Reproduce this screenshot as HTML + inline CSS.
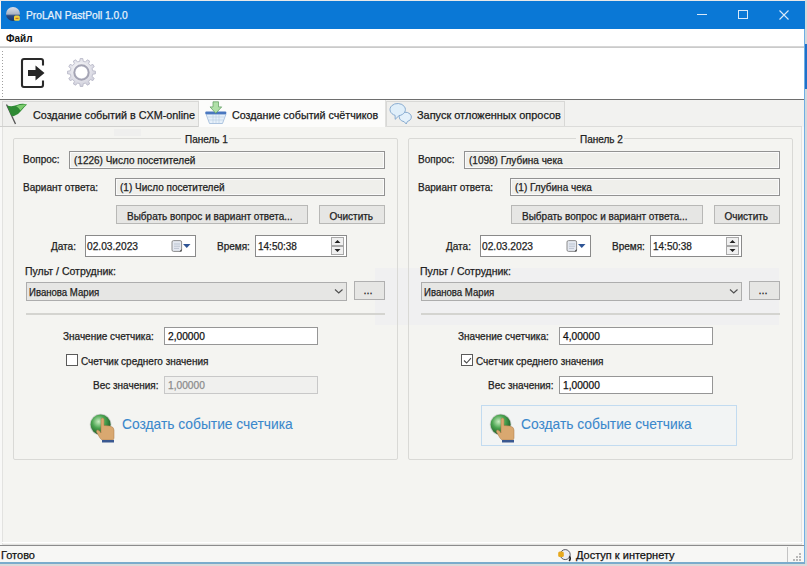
<!DOCTYPE html>
<html><head><meta charset="utf-8">
<style>
*{box-sizing:border-box}
html,body{margin:0;padding:0}
body{width:807px;height:566px;overflow:hidden;position:relative;background:#f4f4f1;font-family:"Liberation Sans",sans-serif}
.a{position:absolute}
.t{position:absolute;white-space:nowrap;font-size:10px;line-height:12px;color:#222;-webkit-text-stroke:0.25px currentColor}
</style></head><body>
<div class="a" style="left:0px;top:0px;width:807px;height:1px;background:#e8e8e8"></div>
<div class="a" style="left:1px;top:1px;width:804px;height:28px;background:#0a78d6"></div>
<svg class="a" style="left:5px;top:6px" width="16" height="16" viewBox="0 0 16 16"><defs><linearGradient id="ai" x1="0" y1="0" x2="0" y2="1"><stop offset="0" stop-color="#d8dee8"/><stop offset="0.5" stop-color="#aab4c4"/><stop offset="0.62" stop-color="#2a4a80"/><stop offset="1" stop-color="#1a3868"/></linearGradient></defs><circle cx="8" cy="8" r="7" fill="url(#ai)"/><rect x="9" y="9.6" width="5.8" height="5.2" rx="1.5" fill="#f2d23a"/><rect x="10.5" y="11.8" width="3" height="1" fill="#c05a20"/></svg>
<div class="t" style="left:25.5px;top:9px;font-size:11px;color:#e8f2fb;transform:scaleX(0.93);transform-origin:0 0;">ProLAN PastPoll 1.0.0</div>
<div class="a" style="left:697px;top:14px;width:10px;height:1px;background:#d8e8f8"></div>
<div class="a" style="left:738px;top:10px;width:10px;height:9px;border:1px solid #d8e8f8"></div>
<svg class="a" style="left:778px;top:9px" width="12" height="12" viewBox="0 0 12 12"><path d="M1.5 1.5L10.5 10.5M10.5 1.5L1.5 10.5" stroke="#d8e8f8" stroke-width="1.1"/></svg>
<div class="a" style="left:0px;top:29px;width:804px;height:18px;background:#fff"></div>
<div class="t" style="left:5.5px;top:31.5px;font-size:10.5px;color:#111;transform:scaleX(0.95);transform-origin:0 0;font-weight:bold;-webkit-text-stroke:0">Файл</div>
<div class="a" style="left:0px;top:46px;width:804px;height:2px;background:linear-gradient(#dcdcdc,#c4c4c4)"></div>
<div class="a" style="left:0px;top:48px;width:804px;height:51px;background:#fff"></div>
<div class="a" style="left:2px;top:51px;width:1px;height:1px;background:#a0a0a0"></div>
<div class="a" style="left:2px;top:54px;width:1px;height:1px;background:#a0a0a0"></div>
<div class="a" style="left:2px;top:57px;width:1px;height:1px;background:#a0a0a0"></div>
<div class="a" style="left:2px;top:60px;width:1px;height:1px;background:#a0a0a0"></div>
<div class="a" style="left:2px;top:63px;width:1px;height:1px;background:#a0a0a0"></div>
<div class="a" style="left:2px;top:66px;width:1px;height:1px;background:#a0a0a0"></div>
<div class="a" style="left:2px;top:69px;width:1px;height:1px;background:#a0a0a0"></div>
<div class="a" style="left:2px;top:72px;width:1px;height:1px;background:#a0a0a0"></div>
<div class="a" style="left:2px;top:75px;width:1px;height:1px;background:#a0a0a0"></div>
<div class="a" style="left:2px;top:78px;width:1px;height:1px;background:#a0a0a0"></div>
<div class="a" style="left:2px;top:81px;width:1px;height:1px;background:#a0a0a0"></div>
<div class="a" style="left:2px;top:84px;width:1px;height:1px;background:#a0a0a0"></div>
<div class="a" style="left:2px;top:87px;width:1px;height:1px;background:#a0a0a0"></div>
<div class="a" style="left:2px;top:90px;width:1px;height:1px;background:#a0a0a0"></div>
<div class="a" style="left:2px;top:93px;width:1px;height:1px;background:#a0a0a0"></div>
<div class="a" style="left:2px;top:96px;width:1px;height:1px;background:#a0a0a0"></div>
<svg class="a" style="left:20px;top:57px" width="26" height="32" viewBox="0 0 26 32"><path d="M23 8.5V4Q23 2 21 2H4Q2 2 2 4V28Q2 30 4 30H21Q23 30 23 28V23.5" stroke="#2a2a2a" stroke-width="2.1" fill="none"/><path d="M8 13H15.5V8.5L24.5 16L15.5 23.5V19H8Z" fill="#262626"/></svg>
<svg class="a" style="left:67px;top:58px" width="29" height="29" viewBox="0 0 29 29"><defs><radialGradient id="gg" cx="45%" cy="40%" r="60%"><stop offset="0" stop-color="#ffffff"/><stop offset="1" stop-color="#d0d0dc"/></radialGradient></defs><path d="M25.66 12.73 L28.44 13.18 L28.44 15.82 L25.66 16.27 L25.05 18.55 L27.23 20.33 L25.91 22.61 L23.28 21.61 L21.61 23.28 L22.61 25.91 L20.33 27.23 L18.55 25.05 L16.27 25.66 L15.82 28.44 L13.18 28.44 L12.73 25.66 L10.45 25.05 L8.67 27.23 L6.39 25.91 L7.39 23.28 L5.72 21.61 L3.09 22.61 L1.77 20.33 L3.95 18.55 L3.34 16.27 L0.56 15.82 L0.56 13.18 L3.34 12.73 L3.95 10.45 L1.77 8.67 L3.09 6.39 L5.72 7.39 L7.39 5.72 L6.39 3.09 L8.67 1.77 L10.45 3.95 L12.73 3.34 L13.18 0.56 L15.82 0.56 L16.27 3.34 L18.55 3.95 L20.33 1.77 L22.61 3.09 L21.61 5.72 L23.28 7.39 L25.91 6.39 L27.23 8.67 L25.05 10.45Z" fill="url(#gg)" stroke="#b4b4c4" stroke-width="0.8"/><circle cx="14.5" cy="14.5" r="7.2" fill="none" stroke="#a4a4b4" stroke-width="2"/><circle cx="14.5" cy="14.5" r="5.8" fill="#fff"/></svg>
<div class="a" style="left:0px;top:99px;width:804px;height:1px;background:#6e6e6e"></div>
<div class="a" style="left:0px;top:100px;width:804px;height:27px;background:#f2f2f0"></div>
<div class="a" style="left:2px;top:101px;width:197px;height:26px;border:1px solid #d8d8d6;border-bottom:none;background:#efefed"></div>
<svg class="a" style="left:4px;top:102px" width="26" height="24" viewBox="0 0 26 24"><path d="M2.5 2.5L11.5 22" stroke="#555" stroke-width="1.3"/><path d="M3 3.5Q8 5 13 3Q18 1 23 2.5Q20 5 17 9Q14 13 10 14Q8 14.5 7 13Z" fill="#2f8a34"/><path d="M12 4Q17 2 22.5 2.6Q19 5 16.5 8.5Q15 6 12 4Z" fill="#7ccc6e"/></svg>
<div class="t" style="left:33px;top:109px;font-size:11px;color:#1a1a1a;transform:scaleX(0.98);transform-origin:0 0;">Создание событий в CXM-online</div>
<div class="a" style="left:199px;top:100px;width:187px;height:28px;background:#fcfcfb;border-right:1px solid #e0e0de"></div>
<svg class="a" style="left:202px;top:100px" width="28" height="26" viewBox="0 0 28 26"><path d="M4 14H24L20.5 23.5H7.5Z" fill="#e6f0fa" stroke="#9cb8d8" stroke-width="0.8"/><path d="M6 17H22M6.8 20H21.2M11 14.5V23M14 14.5V23M17 14.5V23" stroke="#b8cce0" stroke-width="0.6"/><rect x="3.2" y="11.5" width="21.2" height="2.8" rx="1.2" fill="#4a78c0"/><path d="M11 1.8H16.5V6.9H19.7L13.8 13.3L8 6.9H11Z" fill="#b0e0a8" stroke="#5a9a5a" stroke-width="0.7"/></svg>
<div class="t" style="left:232px;top:108.8px;font-size:11px;color:#1a1a1a;transform:scaleX(0.975);transform-origin:0 0;">Создание событий счётчиков</div>
<div class="a" style="left:386px;top:101px;width:179px;height:26px;border:1px solid #d8d8d6;border-bottom:none;background:#efefed"></div>
<svg class="a" style="left:386px;top:100px" width="28" height="26" viewBox="0 0 28 26"><path d="M18.24 21.73A6.1 4.8 0 1 1 21.39 21.51L20.2 24Z" fill="#e4f1fb" stroke="#7ea4cc" stroke-width="0.9" stroke-linejoin="round"/><path d="M9.07 15.33A7.7 6.1 0 1 1 13.04 15.6L9.2 19.3Z" fill="#e0effa" stroke="#7ea4cc" stroke-width="0.9" stroke-linejoin="round"/></svg>
<div class="t" style="left:417px;top:109px;font-size:11px;color:#1a1a1a;transform:scaleX(0.995);transform-origin:0 0;">Запуск отложенных опросов</div>
<div class="a" style="left:0px;top:127px;width:804px;height:418px;background:#f8f8f7"></div>
<div class="a" style="left:2px;top:127px;width:800px;height:418px;border:1px solid #e2e2e0;border-top:none;background:#f4f4f1"></div>
<div class="a" style="left:2px;top:542px;width:800px;height:1px;background:#fff"></div>
<div class="a" style="left:386px;top:126px;width:416px;height:1px;background:#dcdcda"></div>
<div class="a" style="left:0px;top:126px;width:198px;height:1px;background:#cfcfcd"></div>
<div class="a" style="left:375px;top:268px;width:404px;height:57px;background:#f0f0f1"></div>
<div class="a" style="left:114px;top:129px;width:27px;height:7px;background:#efefee"></div>
<div class="a" style="left:13px;top:138px;width:385px;height:322px;border:1px solid #d9d9d6;border-radius:2px"></div>
<div class="a" style="left:181px;top:132px;width:48px;height:10px;background:#f4f4f1"></div>
<div class="t" style="left:185px;top:133.5px;font-size:10px;color:#222;">Панель 1</div>
<div class="t" style="left:23px;top:154px;font-size:10px;color:#222;">Вопрос:</div>
<div class="a" style="left:69px;top:151px;width:316px;height:18px;border:1px solid #929292;box-shadow:inset 0 0 0 1px #fafafa;background:#efefeb"></div>
<div class="t" style="left:74px;top:155px;font-size:10px;color:#222;">(1226) Число посетителей</div>
<div class="t" style="left:23px;top:182px;font-size:10px;color:#222;">Вариант ответа:</div>
<div class="a" style="left:115px;top:177.5px;width:270px;height:18px;border:1px solid #929292;box-shadow:inset 0 0 0 1px #fafafa;background:#efefeb"></div>
<div class="t" style="left:120px;top:182px;font-size:10px;color:#222;">(1) Число посетителей</div>
<div class="a" style="left:116px;top:205px;width:192px;height:19px;border:1px solid #b8b8b6;background:#e6e6e4"></div>
<div class="t" style="left:127px;top:210.8px;font-size:10px;color:#222;">Выбрать вопрос и вариант ответа...</div>
<div class="a" style="left:319px;top:205px;width:66px;height:19px;border:1px solid #b8b8b6;background:#e6e6e4"></div>
<div class="t" style="left:329.5px;top:210.8px;font-size:10px;color:#222;">Очистить</div>
<div class="t" style="left:51px;top:241px;font-size:10px;color:#222;">Дата:</div>
<div class="a" style="left:85px;top:235px;width:111px;height:22px;border:1px solid #8a8a8a;background:#fff"></div>
<div class="t" style="left:87px;top:240.5px;font-size:10.2px;color:#222;">02.03.2023</div>
<svg class="a" style="left:171px;top:240px" width="12" height="12" viewBox="0 0 12 12"><rect x="1" y="0.6" width="9.6" height="10.8" rx="1.5" fill="#e4e8f0" stroke="#8c8c8c" stroke-width="1"/><path d="M3 4H9M3 6.2H9M3 8.4H8" stroke="#aab4c4" stroke-width="0.7"/><path d="M10.6 9L8.5 11.4H10.6Z" fill="#444"/></svg>
<svg class="a" style="left:183px;top:244px" width="8" height="5"><path d="M0 0H7.5L3.75 4Z" fill="#2f5596"/></svg>
<div class="t" style="left:217px;top:241px;font-size:10px;color:#222;">Время:</div>
<div class="a" style="left:255px;top:235px;width:92px;height:22px;border:1px solid #8a8a8a;background:#fff"></div>
<div class="t" style="left:258px;top:240.5px;font-size:10px;color:#222;">14:50:38</div>
<div class="a" style="left:331px;top:237px;width:13px;height:9px;border:1px solid #a8a8a8;background:#f0f0f0"></div>
<div class="a" style="left:331px;top:246px;width:13px;height:9px;border:1px solid #a8a8a8;background:#f0f0f0"></div>
<svg class="a" style="left:334px;top:239px" width="7" height="14"><path d="M0.5 4H6.5L3.5 1Z M0.5 10H6.5L3.5 13Z" fill="#222"/></svg>
<div class="t" style="left:25px;top:265px;font-size:10.5px;color:#222;">Пульт / Сотрудник:</div>
<div class="a" style="left:26px;top:282px;width:321px;height:19px;border:1px solid #adadad;background:#e6e6e4"></div>
<div class="t" style="left:29px;top:287px;font-size:10px;color:#222;transform:scaleX(0.96);transform-origin:0 0;">Иванова Мария</div>
<svg class="a" style="left:334px;top:288px" width="10" height="7"><path d="M1 1.5L4.75 5L8.5 1.5" stroke="#505050" stroke-width="1.15" fill="none"/></svg>
<div class="a" style="left:354px;top:281px;width:31px;height:19px;border:1px solid #b0b0b0;background:#e6e6e4"></div>
<div class="t" style="left:363.5px;top:284px;font-size:11px;color:#222;">...</div>
<div class="a" style="left:26px;top:313px;width:359px;height:2px;background:#d4d4d0"></div>
<div class="t" style="left:63px;top:331.3px;font-size:10px;color:#222;">Значение счетчика:</div>
<div class="a" style="left:164px;top:327px;width:154px;height:18px;border:1px solid #969696;background:#fff"></div>
<div class="t" style="left:168px;top:331.3px;font-size:10.2px;color:#111;">2,00000</div>
<div class="a" style="left:66px;top:354px;width:12px;height:12px;border:1.4px solid #5a5a5a;background:#fff"></div>
<div class="t" style="left:81px;top:355.8px;font-size:10px;color:#222;">Счетчик среднего значения</div>
<div class="t" style="left:93px;top:379.7px;font-size:10px;color:#222;">Вес значения:</div>
<div class="a" style="left:164px;top:376px;width:154px;height:18px;border:1px solid #c8c8c8;background:#f0f0ee"></div>
<div class="t" style="left:168px;top:379.7px;font-size:10.2px;color:#8c8c8c;">1,00000</div>
<svg class="a" style="left:84px;top:408px" width="34" height="36" viewBox="0 0 34 36"><defs><radialGradient id="gl0" cx="40%" cy="35%" r="65%"><stop offset="0" stop-color="#c8ecc0"/><stop offset="0.5" stop-color="#4aa450"/><stop offset="1" stop-color="#1f5e28"/></radialGradient></defs><circle cx="16.6" cy="16.6" r="10.8" fill="#c8ccc8"/><circle cx="16.6" cy="16.6" r="10" fill="url(#gl0)"/><path d="M17 19V11.5Q17 10 18.5 10Q20 10 20 11.5V17.5L26 18Q30 19 30 22V30Q30 32 28 32H19Q17 32 16 30L12.5 24Q12 22.5 13.5 22Q15 22 16 23.5L17 25Z" fill="#d9a870" stroke="#a87a48" stroke-width="0.5"/><rect x="18" y="32" width="12" height="2.5" fill="#3a5890"/></svg>
<div class="t" style="left:122px;top:418px;font-size:15px;color:#3a88cc;transform:scaleX(0.92);transform-origin:0 0;-webkit-text-stroke:0.1px currentColor">Создать событие счетчика</div>
<div class="a" style="left:408px;top:138px;width:385px;height:322px;border:1px solid #d9d9d6;border-radius:2px"></div>
<div class="a" style="left:576px;top:132px;width:48px;height:10px;background:#f4f4f1"></div>
<div class="t" style="left:580px;top:133.5px;font-size:10px;color:#222;">Панель 2</div>
<div class="t" style="left:418px;top:154px;font-size:10px;color:#222;">Вопрос:</div>
<div class="a" style="left:464px;top:151px;width:316px;height:18px;border:1px solid #929292;box-shadow:inset 0 0 0 1px #fafafa;background:#efefeb"></div>
<div class="t" style="left:469px;top:155px;font-size:10px;color:#222;">(1098) Глубина чека</div>
<div class="t" style="left:418px;top:182px;font-size:10px;color:#222;">Вариант ответа:</div>
<div class="a" style="left:510px;top:177.5px;width:270px;height:18px;border:1px solid #929292;box-shadow:inset 0 0 0 1px #fafafa;background:#efefeb"></div>
<div class="t" style="left:515px;top:182px;font-size:10px;color:#222;">(1) Глубина чека</div>
<div class="a" style="left:511px;top:205px;width:192px;height:19px;border:1px solid #b8b8b6;background:#e6e6e4"></div>
<div class="t" style="left:522px;top:210.8px;font-size:10px;color:#222;">Выбрать вопрос и вариант ответа...</div>
<div class="a" style="left:714px;top:205px;width:66px;height:19px;border:1px solid #b8b8b6;background:#e6e6e4"></div>
<div class="t" style="left:724.5px;top:210.8px;font-size:10px;color:#222;">Очистить</div>
<div class="t" style="left:446px;top:241px;font-size:10px;color:#222;">Дата:</div>
<div class="a" style="left:480px;top:235px;width:111px;height:22px;border:1px solid #8a8a8a;background:#fff"></div>
<div class="t" style="left:482px;top:240.5px;font-size:10.2px;color:#222;">02.03.2023</div>
<svg class="a" style="left:566px;top:240px" width="12" height="12" viewBox="0 0 12 12"><rect x="1" y="0.6" width="9.6" height="10.8" rx="1.5" fill="#e4e8f0" stroke="#8c8c8c" stroke-width="1"/><path d="M3 4H9M3 6.2H9M3 8.4H8" stroke="#aab4c4" stroke-width="0.7"/><path d="M10.6 9L8.5 11.4H10.6Z" fill="#444"/></svg>
<svg class="a" style="left:578px;top:244px" width="8" height="5"><path d="M0 0H7.5L3.75 4Z" fill="#2f5596"/></svg>
<div class="t" style="left:612px;top:241px;font-size:10px;color:#222;">Время:</div>
<div class="a" style="left:650px;top:235px;width:92px;height:22px;border:1px solid #8a8a8a;background:#fff"></div>
<div class="t" style="left:653px;top:240.5px;font-size:10px;color:#222;">14:50:38</div>
<div class="a" style="left:726px;top:237px;width:13px;height:9px;border:1px solid #a8a8a8;background:#f0f0f0"></div>
<div class="a" style="left:726px;top:246px;width:13px;height:9px;border:1px solid #a8a8a8;background:#f0f0f0"></div>
<svg class="a" style="left:729px;top:239px" width="7" height="14"><path d="M0.5 4H6.5L3.5 1Z M0.5 10H6.5L3.5 13Z" fill="#222"/></svg>
<div class="t" style="left:420px;top:265px;font-size:10.5px;color:#222;">Пульт / Сотрудник:</div>
<div class="a" style="left:421px;top:282px;width:321px;height:19px;border:1px solid #adadad;background:#e6e6e4"></div>
<div class="t" style="left:424px;top:287px;font-size:10px;color:#222;transform:scaleX(0.96);transform-origin:0 0;">Иванова Мария</div>
<svg class="a" style="left:729px;top:288px" width="10" height="7"><path d="M1 1.5L4.75 5L8.5 1.5" stroke="#505050" stroke-width="1.15" fill="none"/></svg>
<div class="a" style="left:749px;top:281px;width:31px;height:19px;border:1px solid #b0b0b0;background:#e6e6e4"></div>
<div class="t" style="left:758.5px;top:284px;font-size:11px;color:#222;">...</div>
<div class="a" style="left:421px;top:313px;width:359px;height:2px;background:#d4d4d0"></div>
<div class="t" style="left:458px;top:331.3px;font-size:10px;color:#222;">Значение счетчика:</div>
<div class="a" style="left:559px;top:327px;width:154px;height:18px;border:1px solid #969696;background:#fff"></div>
<div class="t" style="left:563px;top:331.3px;font-size:10.2px;color:#111;">4,00000</div>
<div class="a" style="left:461px;top:354px;width:12px;height:12px;border:1.4px solid #5a5a5a;background:#fff"></div>
<svg class="a" style="left:463px;top:356px" width="9" height="9"><path d="M1 4.5L3.6 7L8 2.2" stroke="#4a4a4a" stroke-width="1.1" fill="none"/></svg>
<div class="t" style="left:476px;top:355.8px;font-size:10px;color:#222;">Счетчик среднего значения</div>
<div class="t" style="left:488px;top:379.7px;font-size:10px;color:#222;">Вес значения:</div>
<div class="a" style="left:559px;top:376px;width:154px;height:18px;border:1px solid #969696;background:#fff"></div>
<div class="t" style="left:563px;top:379.7px;font-size:10.2px;color:#111;">1,00000</div>
<div class="a" style="left:481px;top:405px;width:256px;height:41px;border:1px solid #c2dbf0;background:#f2f4f4"></div>
<svg class="a" style="left:484px;top:408px" width="34" height="36" viewBox="0 0 34 36"><defs><radialGradient id="gl395" cx="40%" cy="35%" r="65%"><stop offset="0" stop-color="#c8ecc0"/><stop offset="0.5" stop-color="#4aa450"/><stop offset="1" stop-color="#1f5e28"/></radialGradient></defs><circle cx="16.6" cy="16.6" r="10.8" fill="#c8ccc8"/><circle cx="16.6" cy="16.6" r="10" fill="url(#gl395)"/><path d="M17 19V11.5Q17 10 18.5 10Q20 10 20 11.5V17.5L26 18Q30 19 30 22V30Q30 32 28 32H19Q17 32 16 30L12.5 24Q12 22.5 13.5 22Q15 22 16 23.5L17 25Z" fill="#d9a870" stroke="#a87a48" stroke-width="0.5"/><rect x="18" y="32" width="12" height="2.5" fill="#3a5890"/></svg>
<div class="t" style="left:521px;top:418px;font-size:15px;color:#3a88cc;transform:scaleX(0.92);transform-origin:0 0;-webkit-text-stroke:0.1px currentColor">Создать событие счетчика</div>
<div class="a" style="left:804px;top:29px;width:1px;height:534px;background:#6eaee4"></div>
<div class="a" style="left:805px;top:0px;width:2px;height:566px;background:#d4d8dc"></div>
<div class="a" style="left:805px;top:44px;width:2px;height:45px;background:#2070c8"></div>
<div class="a" style="left:0px;top:545px;width:804px;height:1px;background:#8c8c8c"></div>
<div class="a" style="left:0px;top:546px;width:804px;height:16px;background:#f7f7f5"></div>
<div class="t" style="left:1px;top:549px;font-size:11px;color:#111;">Готово</div>
<svg class="a" style="left:557px;top:548px" width="16" height="14" viewBox="0 0 16 14"><circle cx="8.2" cy="6.6" r="5" fill="#ececf2" stroke="#5a5a62" stroke-width="1"/><path d="M12.4 8.2Q14.2 10.5 12.2 13" stroke="#222" stroke-width="1.6" fill="none"/><rect x="1.2" y="3.5" width="5.6" height="5.6" rx="1.6" fill="#e6a81e"/></svg>
<div class="t" style="left:576px;top:549px;font-size:11px;color:#111;">Доступ к интернету</div>
<div class="a" style="left:787px;top:547px;width:1px;height:15px;background:#c4c4c4"></div>
<div class="a" style="left:799px;top:553px;width:2px;height:2px;background:#b8b8b8"></div>
<div class="a" style="left:796px;top:556px;width:2px;height:2px;background:#b8b8b8"></div>
<div class="a" style="left:799px;top:556px;width:2px;height:2px;background:#b8b8b8"></div>
<div class="a" style="left:793px;top:559px;width:2px;height:2px;background:#b8b8b8"></div>
<div class="a" style="left:796px;top:559px;width:2px;height:2px;background:#b8b8b8"></div>
<div class="a" style="left:799px;top:559px;width:2px;height:2px;background:#b8b8b8"></div>
<div class="a" style="left:0px;top:562px;width:805px;height:2px;background:#7aaccc"></div>
<div class="a" style="left:0px;top:564px;width:807px;height:2px;background:#dadada"></div>
</body></html>
